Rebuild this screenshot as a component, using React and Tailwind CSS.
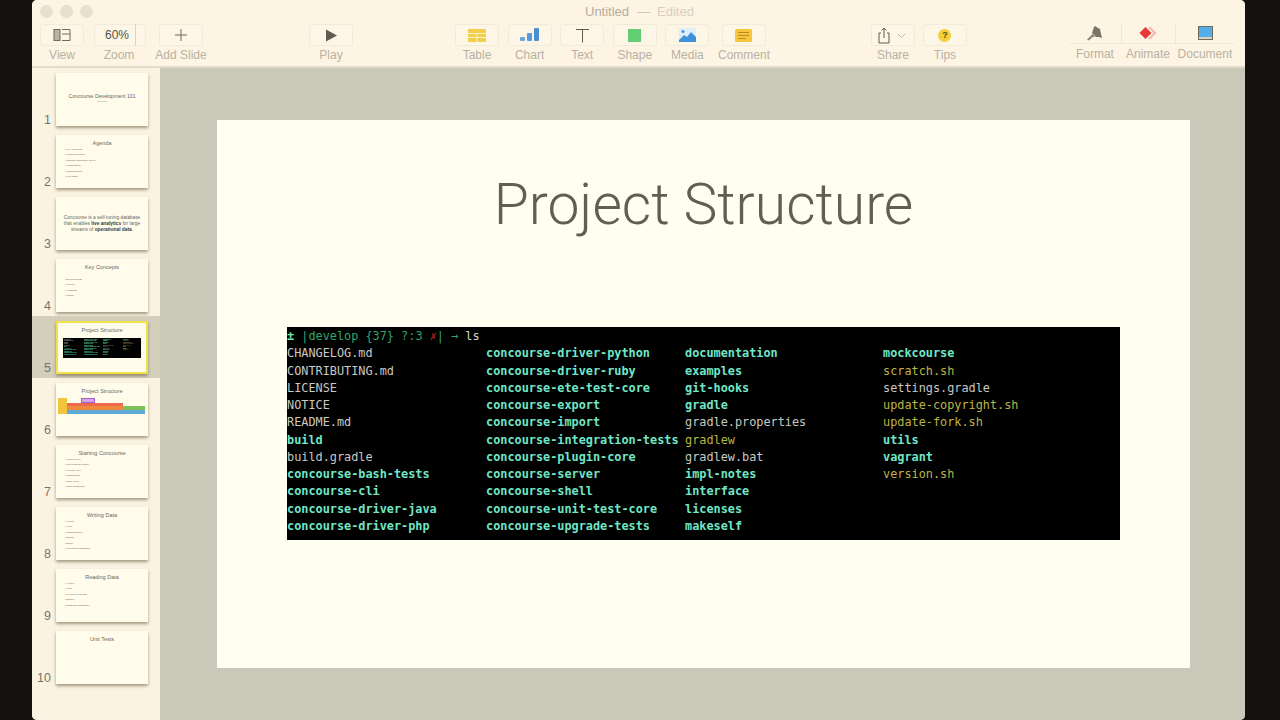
import React from "react";

const CYAN = "text-[#70e6c6] font-bold";
const PLAIN = "text-[#c9c9c2]";
const YELLOW = "text-[#bdb445]";

const columns = [
    [
        ["CHANGELOG.md", PLAIN],
        ["CONTRIBUTING.md", PLAIN],
        ["LICENSE", PLAIN],
        ["NOTICE", PLAIN],
        ["README.md", PLAIN],
        ["build", CYAN],
        ["build.gradle", PLAIN],
        ["concourse-bash-tests", CYAN],
        ["concourse-cli", CYAN],
        ["concourse-driver-java", CYAN],
        ["concourse-driver-php", CYAN],
    ],
    [
        ["concourse-driver-python", CYAN],
        ["concourse-driver-ruby", CYAN],
        ["concourse-ete-test-core", CYAN],
        ["concourse-export", CYAN],
        ["concourse-import", CYAN],
        ["concourse-integration-tests", CYAN],
        ["concourse-plugin-core", CYAN],
        ["concourse-server", CYAN],
        ["concourse-shell", CYAN],
        ["concourse-unit-test-core", CYAN],
        ["concourse-upgrade-tests", CYAN],
    ],
    [
        ["documentation", CYAN],
        ["examples", CYAN],
        ["git-hooks", CYAN],
        ["gradle", CYAN],
        ["gradle.properties", PLAIN],
        ["gradlew", YELLOW],
        ["gradlew.bat", PLAIN],
        ["impl-notes", CYAN],
        ["interface", CYAN],
        ["licenses", CYAN],
        ["makeself", CYAN],
    ],
    [
        ["mockcourse", CYAN],
        ["scratch.sh", YELLOW],
        ["settings.gradle", PLAIN],
        ["update-copyright.sh", YELLOW],
        ["update-fork.sh", YELLOW],
        ["utils", CYAN],
        ["vagrant", CYAN],
        ["version.sh", YELLOW],
    ],
];

const thumbs = [
    { n: 1, kind: "center", title: "Concourse Development 101", sub: "Jeff Nelson" },
    { n: 2, title: "Agenda", items: ["Key Concepts", "Project Structure", "Starting Concourse Server", "Writing Data", "Reading Data", "Unit Tests"] },
    { n: 3, kind: "quote" },
    { n: 4, title: "Key Concepts", spaced: true, items: ["Environments", "Record", "AtoZData", "Nodes"] },
    { n: 5, title: "Project Structure", kind: "terminal" },
    { n: 6, title: "Project Structure", kind: "stack" },
    { n: 7, title: "Starting Concourse", items: ["Launch JVM", "Run Upgrade Tasks", "Prepare JMX", "Start Engine", "Start HTTP", "Start TransportS"] },
    { n: 8, title: "Writing Data", items: ["Atomic", "Limit", "Isolated Buffer", "Engine", "Buffer", "Permanent Database"] },
    { n: 9, title: "Reading Data", items: ["Atomic", "Limit", "No Current Reads", "Engine", "Database and Buffer"] },
    { n: 10, title: "Unit Tests" },
];

const ToolButton = ({ label, width = "w-[44px]", children }) => (
    <div className={`flex flex-col items-center ${width}`}>
        <div className="flex h-[22px] w-[44px] items-center justify-center rounded-[3px] border border-[#f3ebd9] bg-[#fdf5e5]">
            {children}
        </div>
        <span className="mt-[2px] whitespace-nowrap text-[12px] leading-[14px] text-[#b8b2a3]">{label}</span>
    </div>
);

const InspectorTab = ({ label, width, border, children }) => (
    <div className={`flex flex-col items-center ${width}`}>
        <div className={`flex h-[21px] w-full items-center justify-center border-b border-[#f3ebd9] ${border}`}>{children}</div>
        <span className="mt-[3px] whitespace-nowrap text-[12px] leading-[14px] text-[#b8b2a3]">{label}</span>
    </div>
);

const Toolbar = () => (
    <div className="relative h-[68px] shrink-0 border-b-2 border-[#e2dccb] bg-[#fdf4e3]">
        <div className="flex h-[23px] items-center pl-[8px]">
            <div className="flex gap-[7px]">
                <span className="h-[13px] w-[13px] rounded-full bg-[#e8e0cf]" />
                <span className="h-[13px] w-[13px] rounded-full bg-[#e8e0cf]" />
                <span className="h-[13px] w-[13px] rounded-full bg-[#e8e0cf]" />
            </div>
            <div className="ml-[492px] flex items-center whitespace-nowrap text-[13px] leading-[16px]">
                <span className="text-[#b4ae9f]">Untitled</span>
                <span className="ml-[8px] text-[#cfc9b9]">—</span>
                <span className="ml-[7px] text-[#d6d0c0]">Edited</span>
            </div>
        </div>
        <div className="mt-[1px] flex items-start pl-[8px]">
            <ToolButton label="View">
                <svg width="18" height="14" viewBox="0 0 18 14" fill="none" stroke="#6e6a5e" strokeWidth="1">
                    <rect x="1" y="1.5" width="6" height="11" fill="#b9b4a6" />
                    <path d="M9 1.5h8v11h-8M9 6h8" />
                </svg>
            </ToolButton>
            <div className="ml-[10px] flex flex-col items-center">
                <div className="relative flex h-[22px] w-[52px] items-center rounded-[3px] border border-[#f3ebd9] bg-[#fdf5e5] pl-[10px]">
                    <span className="text-[12px] leading-none text-[#55524a]">60%</span>
                    <span className="absolute left-[40px] top-[-1px] h-[22px] w-px bg-[#d9d3c3]" />
                </div>
                <span className="ml-[-2px] mt-[2px] text-[12px] leading-[14px] text-[#b8b2a3]">Zoom</span>
            </div>
            <div className="ml-[13px]">
                <ToolButton label="Add Slide">
                    <svg width="14" height="14" viewBox="0 0 14 14" stroke="#6e6a5e" strokeWidth="1">
                        <path d="M7 1v12M1 7h12" />
                    </svg>
                </ToolButton>
            </div>
            <div className="ml-[106px]">
                <ToolButton label="Play">
                    <svg width="12" height="13" viewBox="0 0 12 13" fill="#5f5b50">
                        <path d="M1 0.5l11 6-11 6z" />
                    </svg>
                </ToolButton>
            </div>
            <div className="ml-[102px] flex gap-[8.6px]">
                <ToolButton label="Table">
                    <svg width="18" height="13" viewBox="0 0 18 13">
                        <rect width="18" height="13" rx="1" fill="#f2cf4a" />
                        <path d="M0 4.5h18M0 8.5h18M9 4.5v8.5" stroke="#fdf0c4" strokeWidth="1" />
                    </svg>
                </ToolButton>
                <ToolButton label="Chart">
                    <svg width="19" height="14" viewBox="0 0 19 14" fill="#5b9bd8">
                        <rect x="0" y="9" width="5" height="4" rx="1" fill="#6aa6dd" />
                        <rect x="7" y="5" width="5" height="8" rx="1" />
                        <rect x="14" y="0" width="5" height="13" rx="1" fill="#4a8fd2" />
                    </svg>
                </ToolButton>
                <ToolButton label="Text">
                    <svg width="15" height="15" viewBox="0 0 15 15" fill="none" stroke="#5f5b50" strokeWidth="1">
                        <path d="M1 1.5h13M7.5 1.5v13" />
                    </svg>
                </ToolButton>
                <ToolButton label="Shape">
                    <div className="h-[13px] w-[13px] bg-[#62cd72]" />
                </ToolButton>
                <ToolButton label="Media">
                    <svg width="17" height="14" viewBox="0 0 17 14">
                        <rect width="17" height="14" rx="1" fill="#dfeefa" />
                        <path d="M0 12l5-5 3 2 4-5 5 5v5H0z" fill="#3f91dc" />
                        <circle cx="4" cy="3.5" r="1.5" fill="#3f91dc" />
                    </svg>
                </ToolButton>
                <div className="ml-[4px]">
                    <ToolButton label="Comment">
                        <svg width="17" height="13" viewBox="0 0 17 13">
                            <rect width="17" height="13" rx="1.5" fill="#f8c53f" />
                            <path d="M3 3.5h11M3 6.5h11M3 9.5h8" stroke="#b98d1c" strokeWidth="1" />
                        </svg>
                    </ToolButton>
                </div>
            </div>
            <div className="ml-[105px] flex gap-[8px]">
                <ToolButton label="Share">
                    <svg width="30" height="17" viewBox="0 0 30 17" fill="none" stroke="#5f5b50" strokeWidth="1">
                        <path d="M3 6H1v10h10V6H9M6 11V1M3.5 3.5L6 1l2.5 2.5" />
                        <path d="M20 7l3.5 3.5L27 7" stroke="#bdb7a8" />
                    </svg>
                </ToolButton>
                <ToolButton label="Tips">
                    <div className="flex h-[13px] w-[13px] items-center justify-center rounded-full bg-[#f3cf3a] text-[9px] font-bold leading-none text-[#5b4d12]">
                        ?
                    </div>
                </ToolButton>
            </div>
            <div className="ml-[102px] mt-[-1px] flex">
                <InspectorTab label="Format" width="w-[52px]" border="">
                    <svg width="16" height="15" viewBox="0 0 16 15" fill="#7a7466">
                        <path d="M7 1l1-1 3 2 2 1 1 5 1 4-3-1-3 0-4-4z" />
                        <path d="M5.500 8l2.500 2.500-3 1-3 3-2-1 3-3z" fill="#8f897a" />
                    </svg>
                </InspectorTab>
                <InspectorTab label="Animate" width="w-[54px]" border="border-l border-l-[#efe7d5]">
                    <svg width="18" height="14" viewBox="0 0 18 14">
                        <path d="M10 1l6 6-6 6 1.500 0 6-6-6-6z" fill="#f2b3a4" />
                        <path d="M9 1.500l5.500 5.500-5.500 5.500 1.500 0 5.500-5.500-5.500-5.500z" fill="#f2b3a4" />
                        <path d="M6.500 1l6 6-6 6-6-6z" fill="#e53a35" />
                    </svg>
                </InspectorTab>
                <InspectorTab label="Document" width="w-[60px]" border="border-l border-l-[#efe7d5]">
                    <div className="h-[14px] w-[15px] border border-[#6f6a5e] bg-[#55ade8] shadow-[inset_0_-2px_0_#d8d2c2]" />
                </InspectorTab>
            </div>
        </div>
    </div>
);

const MiniTerminal = () => (
    <div className="mx-auto mt-[4px] flex h-[20px] w-[78px] gap-[2px] bg-black px-[1px] py-[1px] text-[1px] leading-[1.5px]">
        {columns.map((col, i) => (
            <div key={i} className="w-[18px] overflow-hidden font-['Liberation_Mono',monospace]">
                {col.map(([name, color]) => (
                    <div key={name} className={`h-[1.5px] whitespace-nowrap ${color}`}>
                        {name}
                    </div>
                ))}
            </div>
        ))}
    </div>
);

const MiniStack = () => (
    <div className="mt-[3px] flex px-[2px]">
        <div className="h-[16px] w-[9px] bg-[#f2c63c]" />
        <div className="w-[78px]">
            <div className="ml-[14px] h-[5px] w-[14px] border border-[#a65fc8] bg-[#d9a3ea]" />
            <div className="h-[3px] w-[56px] bg-[#ef6a4d]" />
            <div className="flex h-[4px]">
                <div className="w-[56px] bg-[#ef8a3c]" />
                <div className="w-[22px] bg-[#7fbf5a]" />
            </div>
            <div className="h-[4px] w-[78px] bg-[#5fa9d8]" />
        </div>
    </div>
);

const ThumbBody = ({ t }) => {
    if (t.kind === "center") {
        return (
            <div className="flex h-full flex-col items-center justify-center pb-[3px] text-center">
                <div className="whitespace-nowrap text-[5.2px] leading-[7px] text-[#6a675c]">{t.title}</div>
                <div className="text-[2px] leading-[3px] text-[#8d897c]">{t.sub}</div>
            </div>
        );
    }
    if (t.kind === "quote") {
        return (
            <div className="flex h-full items-center justify-center px-[7px] pt-[2px] text-center text-[4.8px] leading-[6px] text-[#6a675c]">
                <p>
                    Concourse is a self-tuning database that enables <b className="text-[#3a382f]">live analytics</b> for large streams of{" "}
                    <b className="text-[#3a382f]">operational data</b>.
                </p>
            </div>
        );
    }
    return (
        <div className={t.n === 5 ? "pt-[4px]" : "pt-[5px]"}>
            <div className="text-center text-[5.5px] leading-[7px] text-[#6a675c]">{t.title}</div>
            {t.kind === "terminal" && <MiniTerminal />}
            {t.kind === "stack" && <MiniStack />}
            {t.items && (
                <ul className={`pl-[9px] ${t.spaced ? "mt-[6px]" : ""}`}>
                    {t.items.map((item) => (
                        <li key={item} className="h-[5.6px] whitespace-nowrap text-[2.5px] leading-[5.6px] text-[#6a675c]">
                            • {item}
                        </li>
                    ))}
                </ul>
            )}
        </div>
    );
};

const Sidebar = () => (
    <div className="flex w-[128px] shrink-0 flex-col bg-[#fbf3e2]">
        {thumbs.map((t) => {
            const selected = t.n === 5;
            return (
                <div key={t.n} className={`flex h-[62px] shrink-0 items-center ${selected ? "bg-[#d3cfbb]" : ""}`}>
                    <div className="flex w-[19px] justify-end self-end pb-[3px] text-[12.5px] leading-[14px] text-[#77736a]">{t.n}</div>
                    <div
                        className={`ml-[5px] h-[53px] w-[92px] overflow-hidden bg-[#fffcec] shadow-[0_2px_3px_rgba(90,80,50,0.55)] ${
                            selected ? "border-2 border-[#f2e04c]" : ""
                        }`}
                    >
                        <ThumbBody t={t} />
                    </div>
                </div>
            );
        })}
    </div>
);

const Terminal = () => (
    <div className="mx-[70px] mt-[86px] h-[213px] bg-black pt-[1px] font-['DejaVu_Sans_Mono',monospace] text-[11.85px] leading-[17.25px]">
        <div className="whitespace-pre">
            <span className="font-bold text-[#6cf0b4]">±</span>
            <span className="text-[#2fa56b]"> |develop {"{37}"} ?:3 </span>
            <span className="font-bold text-[#b3231f]">✗</span>
            <span className="text-[#2fa56b]">| → </span>
            <span className="text-[#d6d6ce]">ls</span>
        </div>
        <div className="grid grid-cols-[199px_199px_198px_1fr]">
            {columns.map((col, i) => (
                <div key={i}>
                    {col.map(([name, color]) => (
                        <div key={name} className={`whitespace-nowrap ${color}`}>
                            {name}
                        </div>
                    ))}
                </div>
            ))}
        </div>
    </div>
);

const Slide = () => (
    <div className="h-[548px] w-[973px] bg-[#fffff1]">
        <h1 className="pt-[49px] text-center font-['Roboto',sans-serif] text-[57px] font-light leading-[72px] text-[#625e50]">
            Project Structure
        </h1>
        <Terminal />
    </div>
);

export default function App() {
    return (
        <div className="flex h-[720px] w-[1280px] overflow-hidden bg-[#14120e] pl-[32px] font-['Liberation_Sans',Arial,sans-serif]">
            <div className="flex h-full w-[1213px] flex-col overflow-hidden rounded-[5px] bg-[#fdf4e3]">
                <Toolbar />
                <div className="flex min-h-0 flex-1">
                    <Sidebar />
                    <div className="flex-1 bg-[#c9c9b9] pl-[57px] pt-[52px]">
                        <Slide />
                    </div>
                </div>
            </div>
        </div>
    );
}
